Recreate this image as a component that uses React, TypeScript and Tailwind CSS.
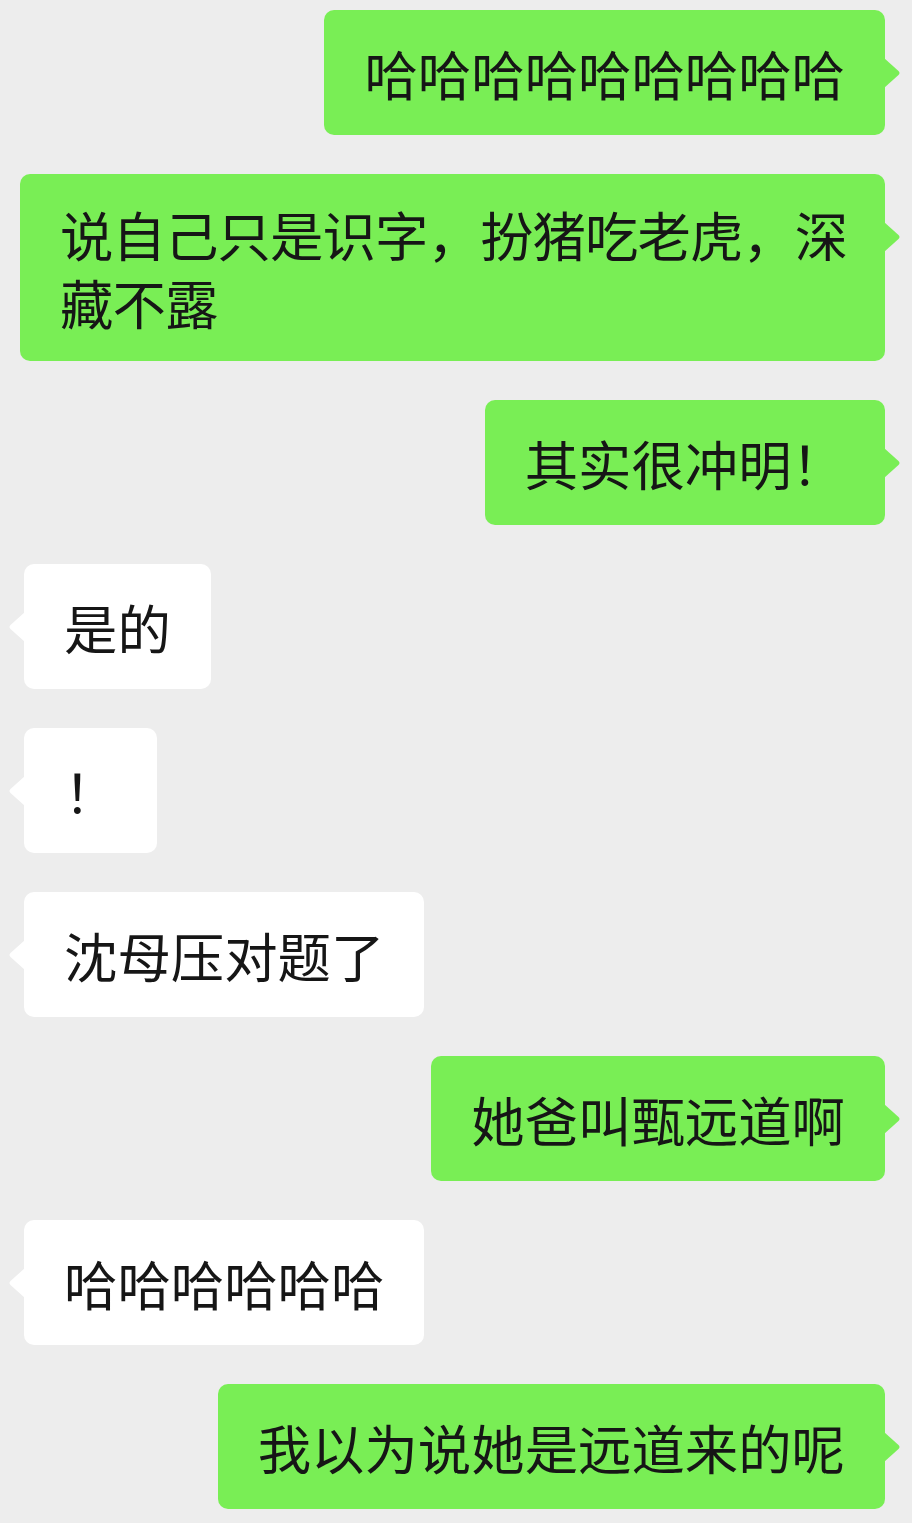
import React from 'react';

type Msg = { id: number; side: 'left' | 'right'; text: string; tight?: boolean };

const messages: Msg[] = [
  { id: 1, side: 'right', text: '哈哈哈哈哈哈哈哈哈' },
  { id: 2, side: 'right', text: '说自己只是识字，扮猪吃老虎，深藏不露', tight: true },
  { id: 3, side: 'right', text: '其实很冲明！' },
  { id: 4, side: 'left', text: '是的' },
  { id: 5, side: 'left', text: '！' },
  { id: 6, side: 'left', text: '沈母压对题了' },
  { id: 7, side: 'right', text: '她爸叫甄远道啊' },
  { id: 8, side: 'left', text: '哈哈哈哈哈哈' },
  { id: 9, side: 'right', text: '我以为说她是远道来的呢' },
];

const Tail: React.FC<{ side: 'left' | 'right' }> = ({ side }) => (
  <svg
    width="17"
    height="30"
    viewBox="0 0 17 30"
    className={`absolute top-[48px] ${side === 'right' ? 'left-full -ml-px' : 'right-full -mr-px -scale-x-100'}`}
  >
    <path d="M0 0 L14.5 13 Q16.5 15 14.5 17 L0 30 Z" fill={side === 'right' ? '#79ee55' : '#ffffff'} />
  </svg>
);

const Bubble: React.FC<{ msg: Msg }> = ({ msg }) => {
  const isRight = msg.side === 'right';
  return (
    <div className={`flex ${isRight ? 'justify-end pl-[20px] pr-[27px]' : 'justify-start pl-[24px] pr-[27px]'}`}>
      <div
        className={`relative min-h-[125px] flex items-center rounded-[10px] py-[25.5px] pl-[40px] ${
          msg.tight ? 'pr-[36px] tracking-[-0.9px]' : 'pr-[40px]'
        } ${isRight ? 'bg-[#79ee55]' : 'bg-white'}`}
      >
        <p className="text-[53.4px] leading-[68px] text-[#161616] break-all">{msg.text}</p>
        <Tail side={msg.side} />
      </div>
    </div>
  );
};

export default function App() {
  return (
    <div
      className="min-h-[1523px] w-[912px] bg-[#ededed] pt-[10px] pb-[14px] flex flex-col gap-[39px]"
      style={{ fontFamily: '"Noto Sans CJK SC", "Noto Sans", sans-serif' }}
    >
      {messages.map((m) => (
        <Bubble key={m.id} msg={m} />
      ))}
    </div>
  );
}
